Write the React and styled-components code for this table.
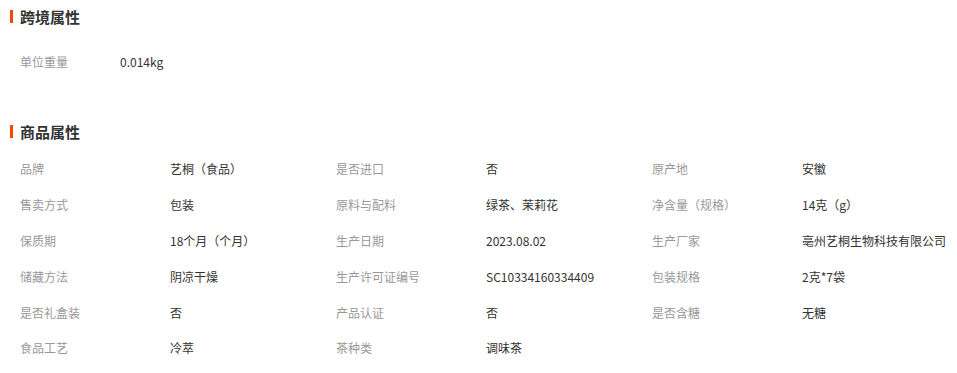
import React from 'react';
import styled, { createGlobalStyle } from 'styled-components';

const GlobalStyle = createGlobalStyle`
  body {
    margin: 0;
    background: #fff;
    font-family: "Noto Sans CJK SC", "Liberation Sans", sans-serif;
    color: #333;
  }
`;

const crossBorder = [{ label: '单位重量', value: '0.014kg' }];

const goods = [
  ['品牌', '艺桐（食品）'],
  ['是否进口', '否'],
  ['原产地', '安徽'],
  ['售卖方式', '包装'],
  ['原料与配料', '绿茶、茉莉花'],
  ['净含量（规格）', '14克（g）'],
  ['保质期', '18个月（个月）'],
  ['生产日期', '2023.08.02'],
  ['生产厂家', '亳州艺桐生物科技有限公司'],
  ['储藏方法', '阴凉干燥'],
  ['生产许可证编号', 'SC10334160334409'],
  ['包装规格', '2克*7袋'],
  ['是否礼盒装', '否'],
  ['产品认证', '否'],
  ['是否含糖', '无糖'],
  ['食品工艺', '冷萃'],
  ['茶种类', '调味茶'],
];

const App = () => {
  return (
    <Page>
      <GlobalStyle />
      <Section>
        <Title>跨境属性</Title>
        <Single>
          {crossBorder.map((item) => (
            <React.Fragment key={item.label}>
              <Label>{item.label}</Label>
              <Value>{item.value}</Value>
            </React.Fragment>
          ))}
        </Single>
      </Section>
      <Section top={36}>
        <Title>商品属性</Title>
        <Grid>
          {goods.map(([label, value]) => (
            <React.Fragment key={label}>
              <Label>{label}</Label>
              <Value>{value}</Value>
            </React.Fragment>
          ))}
        </Grid>
      </Section>
    </Page>
  );
};
export default App;

const Page = styled.div`
  width: 957px;
  height: 373px;
  overflow: hidden;
`;

const Section = styled.section`
  margin-top: ${(props) => props.top || 0}px;
`;

const Title = styled.h3`
  margin: 0;
  height: 36px;
  box-sizing: border-box;
  padding: 0 0 3px 10px;
  display: flex;
  align-items: center;
  font-size: 15px;
  font-weight: bold;
  color: #333;
  &::before {
    content: '';
    width: 3px;
    height: 13px;
    background: #ff4400;
    margin-right: 7px;
  }
`;

const Single = styled.div`
  display: grid;
  grid-template-columns: 100px auto;
  grid-auto-rows: 36px;
  padding-left: 20px;
  margin-top: 7px;
`;

const Grid = styled.div`
  display: grid;
  grid-template-columns: 150px 166px 150px 166px 150px auto;
  grid-auto-rows: 35.8px;
  padding-left: 20px;
`;

const Label = styled.div`
  font-size: 12px;
  color: #999;
  display: flex;
  align-items: center;
  white-space: nowrap;
`;

const Value = styled.div`
  font-size: 12px;
  color: #333;
  display: flex;
  align-items: center;
  white-space: nowrap;
`;
